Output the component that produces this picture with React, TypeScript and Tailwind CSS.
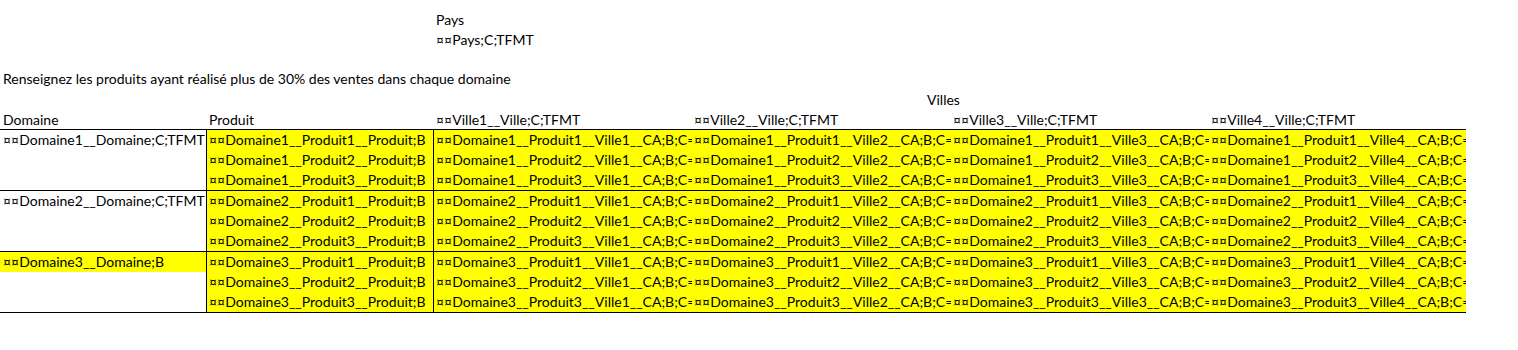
const domaines = ["Domaine1", "Domaine2", "Domaine3"];
const produits = ["Produit1", "Produit2", "Produit3"];
const villes = [
  { name: "Ville1", w: "w-[258px]" },
  { name: "Ville2", w: "w-[259px]" },
  { name: "Ville3", w: "w-[258px]" },
  { name: "Ville4", w: "w-[257px]" },
];

export default function App() {
  return (
    <div className="w-[1518px] h-[350px] bg-white text-black text-[14px] leading-[20px] font-['Lato','Liberation_Sans',sans-serif] pt-[10px]">
      {/* Pays */}
      <div className="h-[20px] pl-[436px]">Pays</div>
      <div className="h-[20px] pl-[436px]">¤¤Pays;C;TFMT</div>
      <div className="h-[20px]" />
      <div className="h-[20px] pl-[3px] -mt-[1px]">
        Renseignez les produits ayant réalisé plus de 30% des ventes dans chaque domaine
      </div>
      <div className="h-[20px] mt-[1px] pl-[927px]">Villes</div>

      {/* header */}
      <div className="flex w-[1466px] h-[20px] border-b border-black box-border">
        <div className="w-[206px] pl-[3px]">Domaine</div>
        <div className="w-[228px] pl-[3px]">Produit</div>
        {villes.map((v) => (
          <div key={v.name} className={`${v.w} pl-[2px] whitespace-nowrap`}>
            ¤¤{v.name}__Ville;C;TFMT
          </div>
        ))}
      </div>

      {/* groups */}
      {domaines.map((d, di) => (
        <div key={d} className="flex w-[1466px] border-b border-black box-border">
          <div className="w-[206px] shrink-0">
            <div
              className={`h-[20px] pl-[3px] whitespace-nowrap overflow-hidden ${
                di === 2 ? "bg-[#ffff00]" : ""
              }`}
            >
              {di === 2 ? `¤¤${d}__Domaine;B` : `¤¤${d}__Domaine;C;TFMT`}
            </div>
          </div>
          <div className="w-[228px] shrink-0 border-x border-black bg-[#ffff00]">
            {produits.map((p) => (
              <div key={p} className="h-[20px] pl-[2px] whitespace-nowrap overflow-hidden">
                ¤¤{d}__{p}__Produit;B
              </div>
            ))}
          </div>
          <div className="flex flex-col bg-[#ffff00] w-[1032px]">
            {produits.map((p, pi) => (
              <div key={p} className={`flex ${pi === 2 ? "h-[19px]" : "h-[20px]"}`}>
                {villes.map((v) => (
                  <div key={v.name} className={`${v.w} shrink-0 pl-[2px] whitespace-nowrap overflow-hidden`}>
                    ¤¤{d}__{p}__{v.name}__CA;B;C=N;TFMT
                  </div>
                ))}
              </div>
            ))}
          </div>
        </div>
      ))}
    </div>
  );
}
